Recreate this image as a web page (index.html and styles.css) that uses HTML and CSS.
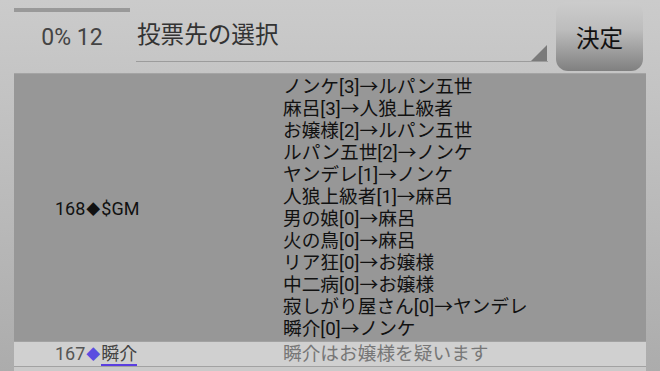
FILE: index.html
```html
<!DOCTYPE html>
<html>
<head>
    <meta name="viewport" content="width=device-width, initial-scale=1.0">
    <title>投票</title>
    <link rel="stylesheet" href="styles.css">
</head>
<body>
<div class="bar">
    <div class="timer">
        <div class="progress"></div>
        <span class="count">0% 12</span>
    </div>
    <div class="select">
        <span class="select-label">投票先の選択</span>
        <span class="tri"></span>
    </div>
    <button class="decide">決定</button>
</div>

<table class="log">
    <tr class="vote">
        <td class="who">168<span class="mark">◆</span>$GM</td>
        <td class="msg">
            ノンケ[3]→ルパン五世<br>
            麻呂[3]→人狼上級者<br>
            お嬢様[2]→ルパン五世<br>
            ルパン五世[2]→ノンケ<br>
            ヤンデレ[1]→ノンケ<br>
            人狼上級者[1]→麻呂<br>
            男の娘[0]→麻呂<br>
            火の鳥[0]→麻呂<br>
            リア狂[0]→お嬢様<br>
            中二病[0]→お嬢様<br>
            寂しがり屋さん[0]→ヤンデレ<br>
            瞬介[0]→ノンケ
        </td>
    </tr>
    <tr class="say">
        <td class="who">167<span class="mark blue">◆</span><span class="name">瞬介</span></td>
        <td class="msg">瞬介はお嬢様を疑います</td>
    </tr>
    <tr class="say">
        <td class="who">&nbsp;</td>
        <td class="msg">&nbsp;</td>
    </tr>
</table>
</body>
</html>
```

FILE: styles.css
```css
* {
    margin: 0;
    padding: 0;
    box-sizing: border-box;
}
body {
    font-family: Roboto, "Noto Sans CJK JP", sans-serif;
    background: linear-gradient(#cbcbcb, #acacac);
    height: 100vh;
    overflow: hidden;
    padding: 0 14px;
}
.bar {
    display: flex;
    height: 73px;
    gap: 6px;
}
.timer {
    width: 116px;
    padding-top: 8px;
    text-align: center;
}
.progress {
    height: 4px;
    background: #999;
}
.count {
    display: block;
    margin-top: 12px;
    font-size: 23px;
    color: #444;
}
.select {
    position: relative;
    width: 412px;
    height: 62px;
    border-bottom: 1px solid #9c9c9c;
    padding: 16px 0 0 1px;
}
.select-label {
    font-size: 23.6px;
    color: #333;
}
.tri {
    position: absolute;
    right: 1px;
    bottom: 0;
    width: 0;
    height: 0;
    border-left: 16px solid transparent;
    border-bottom: 16px solid #7a7a7a;
}
.decide {
    width: 87px;
    height: 69px;
    margin: 2px 0 0 2px;
    border: 0;
    border-radius: 12px;
    background: linear-gradient(#cccccc, #bdbdbd 40%, #808080);
    font-family: Roboto, "Noto Sans CJK JP", sans-serif;
    font-size: 23.6px;
    color: #111;
}
.log {
    width: 632px;
    border-collapse: collapse;
    border-top: 1px solid #a4a4a4;
    font-size: 18.7px;
}
.log td {
    border-bottom: 1px solid #a2a2a2;
    vertical-align: middle;
}
.who {
    width: 269px;
    padding-left: 41px;
    font-size: 18px;
    color: #111;
    white-space: nowrap;
}
.mark {
    font-size: 14px;
    margin: 0 1px;
    vertical-align: 1px;
}
.msg {
    line-height: 22px;
    color: #111;
}
.vote td {
    background: #979797;
    padding-top: 2px;
    padding-bottom: 1px;
}
.say td {
    background: #d0d0d0;
    height: 25px;
    line-height: 24px;
}
.say:last-child td {
    background: #cacaca;
}
.say .who {
    color: #555;
}
.say .msg {
    color: #777;
}
.mark.blue {
    color: #5a4de0;
}
.name {
    color: #444;
    border-bottom: 2px solid #5a3ee0;
}
```
